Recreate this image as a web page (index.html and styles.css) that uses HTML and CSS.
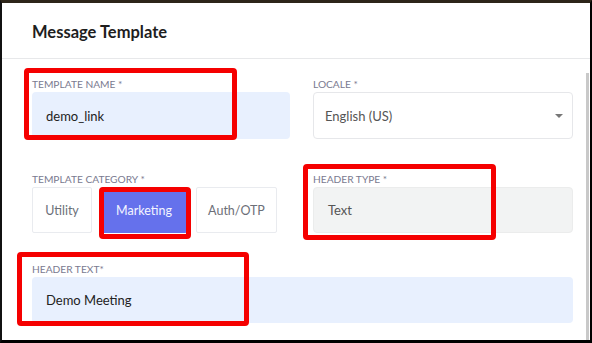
FILE: index.html
```html
<!DOCTYPE html>
<html lang="en">
<head>
    <meta charset="UTF-8">
    <meta name="viewport" content="width=device-width, initial-scale=1.0">
    <title>Message Template</title>
    <link rel="stylesheet" href="styles.css">
</head>
<body>
    <div class="frame">
        <div class="modal-header">
            <h2>Message Template</h2>
        </div>

        <div class="modal-body">
            <div class="form">
                <div class="field">
                    <label>Template Name *</label>
                    <div class="input filled">demo_link</div>
                </div>
                <div class="field">
                    <label>Locale *</label>
                    <div class="input select">
                        <span>English (US)</span>
                        <span class="caret"></span>
                    </div>
                </div>

                <div class="field">
                    <label>Template Category *</label>
                    <div class="choices">
                        <button class="choice utility">Utility</button>
                        <button class="choice marketing active">Marketing</button>
                        <button class="choice auth">Auth/OTP</button>
                    </div>
                </div>
                <div class="field">
                    <label>Header Type *</label>
                    <div class="input disabled">Text</div>
                </div>

                <div class="field wide">
                    <label>Header Text*</label>
                    <div class="input filled">Demo Meeting</div>
                </div>
            </div>
            <div class="scrollbar"></div>
        </div>

        <!-- annotation boxes drawn over the form -->
        <div class="mark mark-name"></div>
        <div class="mark mark-category"></div>
        <div class="mark mark-type"></div>
        <div class="mark mark-text"></div>
    </div>
</body>
</html>
```

FILE: styles.css
```css
* {
    box-sizing: border-box;
}
body {
    margin: 0;
    font-family: Lato, "Noto Sans", Arial, sans-serif;
    background: #000;
}
.frame {
    position: relative;
    width: 592px;
    height: 343px;
    background: #fff;
    border-top: 3px solid #2d2519;
    border-left: 2px solid #111;
    border-right: 2px solid #000;
    border-bottom: 3px solid #000;
    display: flex;
    flex-direction: column;
    overflow: hidden;
}
.modal-header {
    height: 56px;
    padding: 3px 0 0 30px;
    display: flex;
    align-items: center;
    border-bottom: 1px solid #e7e8ea;
    flex-shrink: 0;
}
.modal-header h2 {
    margin: 0;
    font-size: 16.5px;
    font-weight: 700;
    color: #1e1e1e;
}
.modal-body {
    flex: 1;
    display: flex;
}
.form {
    flex: 1;
    padding: 17px 13px 0 30px;
    display: grid;
    grid-template-columns: 258px 260px;
    column-gap: 23px;
    row-gap: 32px;
    align-content: start;
}
.field.wide {
    grid-column: 1 / 3;
    margin-top: -4px;
}
label {
    display: block;
    font-size: 10.2px;
    line-height: 16px;
    text-transform: uppercase;
    color: #7a7a90;
}
.input {
    height: 47px;
    border-radius: 4px;
    padding-left: 14px;
    display: flex;
    align-items: center;
    font-size: 13px;
    color: #222;
}
.filled {
    background: #e8f0fe;
}
.field.wide .input {
    height: 46px;
}
.select {
    border: 1px solid #e6e7ea;
    padding: 0 9px 0 11px;
    justify-content: space-between;
    color: #555;
}
.caret {
    width: 0;
    height: 0;
    border-left: 4px solid transparent;
    border-right: 4px solid transparent;
    border-top: 4px solid #777;
}
.disabled {
    height: 46px;
    background: #f2f3f3;
    border: 1px solid #ebecec;
    color: #555;
}
.choices {
    display: flex;
    gap: 9px;
}
.choice {
    height: 46px;
    border: 1px solid #e9ebef;
    border-radius: 2px;
    background: #fff;
    font-family: inherit;
    font-size: 12.5px;
    color: #6c6f78;
    padding: 0;
}
.utility {
    width: 60px;
}
.marketing {
    width: 86px;
}
.auth {
    width: 81px;
}
.choice.active {
    background: #6571ec;
    border-color: #6571ec;
    color: #f4f5ff;
}
.scrollbar {
    width: 3px;
    margin: 14px 1px 0 0;
    background: #c9c9c9;
}
.mark {
    position: absolute;
    border: 5px solid #f50000;
    border-radius: 4px;
}
.mark-name {
    left: 22px;
    top: 65px;
    width: 213px;
    height: 72px;
}
.mark-category {
    left: 97px;
    top: 184px;
    width: 92px;
    height: 52px;
}
.mark-type {
    left: 301px;
    top: 161px;
    width: 193px;
    height: 76px;
}
.mark-text {
    left: 15px;
    top: 249px;
    width: 232px;
    height: 74px;
}
```
